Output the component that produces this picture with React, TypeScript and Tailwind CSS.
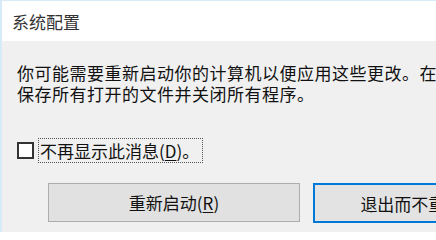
import React from "react";

const font = { fontFamily: '"Noto Sans CJK SC", "Microsoft YaHei", sans-serif' };

export default function App() {
  return (
    <div
      className="w-[436px] h-[232px] overflow-hidden bg-[#f0f0f0] border-l-2 border-t border-[#d6eaf7] flex flex-col text-[#111]"
      style={font}
    >
      <div className="h-[40px] shrink-0 bg-white flex items-center pl-[10px] text-[17px] leading-none text-[#333]">
        系统配置
      </div>
      <div className="flex flex-col pl-[15px] pt-[21px]">
        <div className="text-[17px] leading-[21px] whitespace-nowrap tracking-[0.5px]">
          <div>你可能需要重新启动你的计算机以便应用这些更改。在关闭前</div>
          <div>保存所有打开的文件并关闭所有程序。</div>
        </div>
        <div className="mt-[34px] flex items-center h-[25px]">
          <div className="w-[17px] h-[17px] border-2 border-[#333] bg-white shrink-0" />
          <div className="ml-[4px] h-[25px] w-[165px] border border-dotted border-[#555] flex items-center pl-[1px] text-[17px] leading-none whitespace-nowrap">
            不再显示此消息(<span className="underline underline-offset-2">D</span>)。
          </div>
        </div>
        <div className="mt-[20px] flex gap-[13px] pl-[31px] whitespace-nowrap">
          <div className="w-[252px] h-[39px] shrink-0 bg-[#e1e1e1] border border-[#adadad] flex items-center justify-center text-[17px] leading-none">
            重新启动(<span className="underline underline-offset-2">R</span>)
          </div>
          <div className="w-[252px] h-[40px] shrink-0 bg-[#e3e3e3] border-2 border-[#0078d7] flex items-center justify-center text-[17px] leading-none">
            退出而不重新启动(<span className="underline underline-offset-2">X</span>)
          </div>
        </div>
      </div>
    </div>
  );
}
